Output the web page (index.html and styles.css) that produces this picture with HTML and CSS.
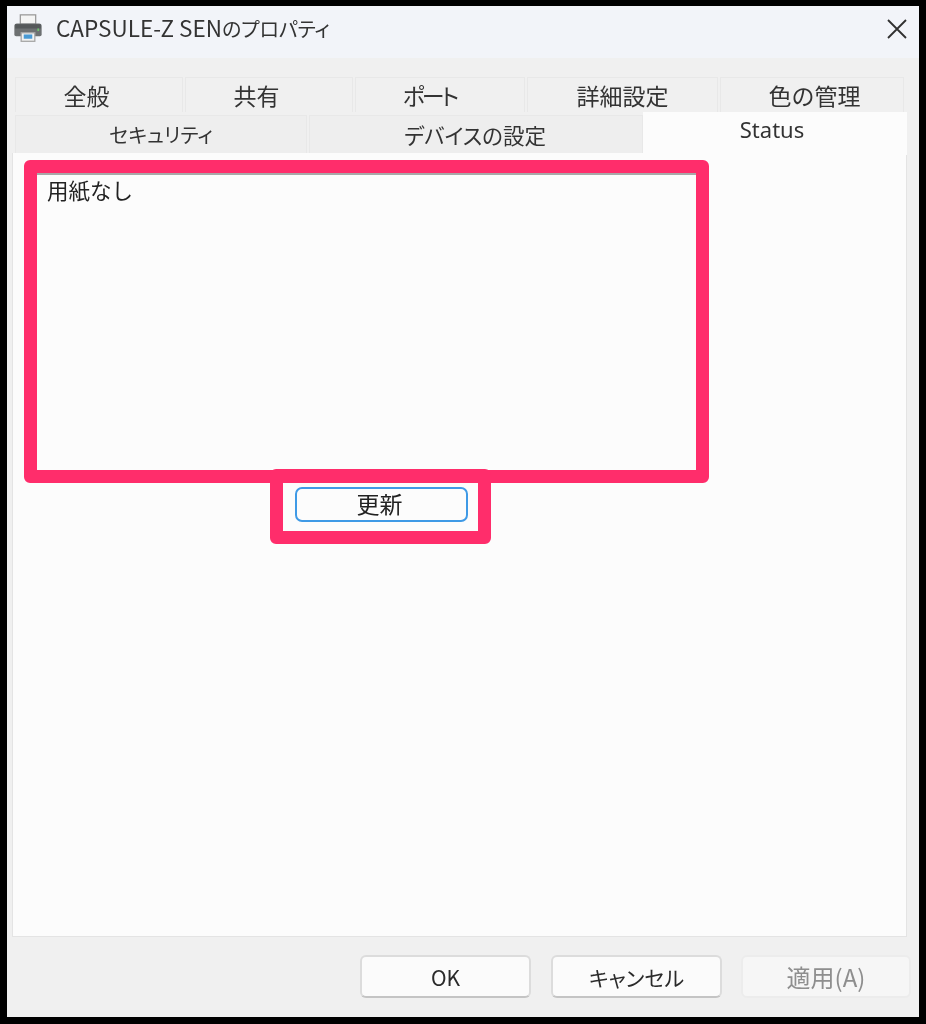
FILE: index.html
```html
<!DOCTYPE html>
<html lang="ja">
<head>
<meta charset="utf-8">
<title>CAPSULE-Z SENのプロパティ</title>
<link rel="stylesheet" href="styles.css">
</head>
<body>
<div class="window">
  <header class="titlebar">
    <svg class="printer" width="32" height="29" viewBox="0 0 36 34" aria-hidden="true">
      <rect x="9" y="1" width="18" height="11" fill="#f4f4f4" stroke="#9a9a9a" stroke-width="1.5"/>
      <path d="M5 11h26a3 3 0 0 1 3 3v10a2 2 0 0 1-2 2H4a2 2 0 0 1-2-2V14a3 3 0 0 1 3-3z" fill="#6d7072"/>
      <rect x="3" y="12" width="30" height="5" fill="#55585a"/>
      <rect x="29" y="17" width="2" height="3" fill="#6fc46f"/>
      <rect x="10" y="22" width="16" height="10" fill="#f2f2f2" stroke="#a5a5a5" stroke-width="1.5"/>
      <rect x="13" y="24" width="10" height="5" fill="#4a9ad4"/>
    </svg>
    <span class="title"><span class="title-latin">CAPSULE-Z SEN</span>のプロパティ</span>
    <svg class="close" width="20" height="20" viewBox="0 0 20 20" aria-hidden="true">
      <path d="M1 1l18 18M19 1L1 19" stroke="#303030" stroke-width="1.8" fill="none"/>
    </svg>
  </header>
  <nav class="tabs">
    <div class="tab-row tab-row-back">
      <div class="tab w168 nudge-left">全般</div>
      <div class="tab w168 nudge-left">共有</div>
      <div class="tab w170 tab-port">ポート</div>
      <div class="tab w191">詳細設定</div>
      <div class="tab w184 nudge-right">色の管理</div>
    </div>
    <div class="tab-row tab-row-front">
      <div class="tab w292 tab-low">セキュリティ</div>
      <div class="tab w334 tab-low tab-device">デバイスの設定</div>
      <div class="tab-active">Status</div>
    </div>
  </nav>
  <main class="panel">
    <div class="callout status-callout">
      <div class="status-field">用紙なし</div>
    </div>
    <div class="callout refresh-callout">
      <button class="refresh">更新</button>
    </div>
  </main>
  <footer class="footer">
    <button class="btn w171">OK</button>
    <button class="btn w171">キャンセル</button>
    <button class="btn btn-disabled w170" disabled>適用(A)</button>
  </footer>
</div>
</body>
</html>
```

FILE: styles.css
```css
* { box-sizing: border-box; }
html, body { margin: 0; height: 100%; }
body {
  background: #000;
  padding: 6px 7px 7px;
  font-family: "Noto Sans CJK JP", "Noto Sans", sans-serif;
  font-feature-settings: "palt";
  color: #222;
  overflow: hidden;
}
.window {
  height: 1011px;
  display: flex;
  flex-direction: column;
  background: #f0f0f0;
  filter: blur(.45px);
}
.titlebar {
  height: 52px;
  flex: none;
  background: #f2f4f9;
  display: flex;
  align-items: center;
  padding: 0 12px 0 5px;
}
.printer { flex: none; margin-top: -8px; }
.title {
  margin-left: 12px;
  font-size: 20px;
  line-height: 28px;
  color: #333;
  flex: 1;
  margin-top: -9px;
  letter-spacing: -.1px;
}
.title-latin { font-size: 22.5px; letter-spacing: 0; }
.close { flex: none; margin-top: -6px; }
.tabs { padding: 19px 0 0 8px; flex: none; }
.tab-row { display: flex; }
.tab-row-back { gap: 2px; height: 35px; }
.tab-row-front { gap: 2px; height: 41px; align-items: flex-end; }
.tab {
  height: 35px;
  background: #f0f0f0;
  border: 1px solid #e8e8e8;
  border-bottom: 0;
  font-size: 23px;
  line-height: 34px;
  text-align: center;
  color: #333;
  font-feature-settings: normal;
}
.nudge-left { padding-right: 25px; }
.nudge-right { padding-left: 5px; }
.tab-port {
  padding-right: 21px;
  letter-spacing: -3px;
  font-feature-settings: "palt";
}
.tab-low {
  height: 38px;
  background: #eeeeee;
  font-size: 20px;
  line-height: 38px;
  font-feature-settings: "palt";
}
.tab-device { font-size: 21.5px; padding-right: 2px; }
.w168 { width: 168px; }
.w170 { width: 170px; }
.w171 { width: 171px; }
.w184 { width: 184px; }
.w191 { width: 191px; }
.w292 { width: 292px; }
.w334 { width: 334px; }
.tab-active {
  width: 264px;
  height: 43px;
  margin-left: -2px;
  margin-bottom: -2px;
  background: #fcfcfc;
  padding-right: 6px;
  font-size: 22px;
  line-height: 34px;
  text-align: center;
  color: #333;
  font-family: "Noto Sans", sans-serif;
  position: relative;
  z-index: 1;
}
.panel {
  width: 895px;
  height: 784px;
  flex: none;
  margin-left: 5px;
  background: #fcfcfc;
  border: 1px solid #e4e4e4;
  border-top: 0;
  padding: 7px 0 0 11px;
}
.callout {
  border: 13px solid #ff2d6b;
  border-radius: 6px;
}
.status-callout { width: 685px; height: 323px; }
.status-field {
  height: 100%;
  border-top: 2px solid #a8a8a8;
  padding: 0 0 0 10px;
  font-size: 21.5px;
  line-height: 30px;
  color: #222;
  font-feature-settings: normal;
  background: #fcfcfc;
}
.refresh-callout {
  width: 221px;
  height: 75px;
  margin: -14px 0 0 246px;
  padding: 5px 0 0 12px;
  position: relative;
}
.refresh {
  display: block;
  width: 173px;
  height: 35px;
  border: 2px solid #3f9ae6;
  border-radius: 7px;
  background: #fcfcfc;
  font: inherit;
  font-size: 23px;
  line-height: 26px;
  padding: 0 4px 4px 0;
  color: #222;
  font-feature-settings: normal;
}
.footer {
  flex: 1;
  display: flex;
  justify-content: flex-end;
  gap: 20px;
  padding: 18px 8px 0 0;
}
.btn {
  height: 43px;
  background: #fbfbfb;
  border: 2px solid #dcdcdc;
  border-bottom-color: #c4c4c4;
  border-radius: 6px;
  font: inherit;
  font-size: 21px;
  line-height: 34px;
  padding: 0;
  color: #2a2a2a;
}
.btn-disabled {
  margin-left: -1px;
  background: #f6f6f6;
  border-color: #ececec;
  color: #8e8e8e;
  font-size: 24px;
}
```
